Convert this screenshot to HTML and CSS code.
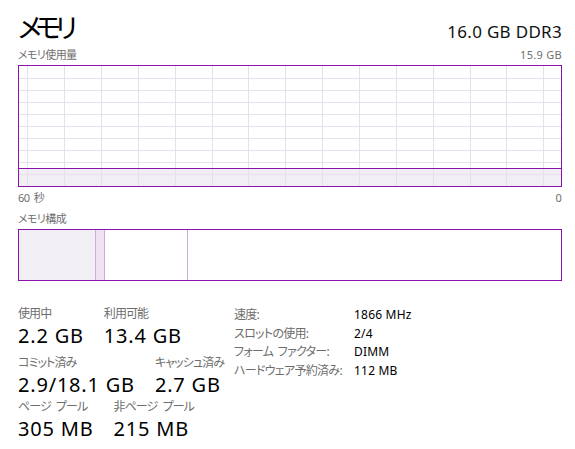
FILE: index.html
```html
<!DOCTYPE html>
<html lang="ja">
<head>
<meta charset="utf-8">
<title>メモリ</title>
<link rel="stylesheet" href="styles.css">
</head>
<body>
<div class="tm">
  <header class="hd">
    <h1 class="title">メモリ</h1>
    <div class="spec">16.0 GB DDR3</div>
  </header>
  <div class="axis axis-top"><span>メモリ使用量</span><span class="num">15.9 GB</span></div>
  <div class="graph">
    <svg width="542" height="120" viewBox="0 0 542 120">
      <rect x="0" y="103" width="542" height="17" fill="#f2eff4"/>
      <g stroke="#e7dfeb" stroke-width="1">
        <line x1="0" y1="12.5" x2="542" y2="12.5"/>
        <line x1="0" y1="24.5" x2="542" y2="24.5"/>
        <line x1="0" y1="36.5" x2="542" y2="36.5"/>
        <line x1="0" y1="48.5" x2="542" y2="48.5"/>
        <line x1="0" y1="60.5" x2="542" y2="60.5"/>
        <line x1="0" y1="72.5" x2="542" y2="72.5"/>
        <line x1="0" y1="84.5" x2="542" y2="84.5"/>
        <line x1="0" y1="96.5" x2="542" y2="96.5"/>
        <line x1="0" y1="108.5" x2="542" y2="108.5"/>
        <line x1="8.5" y1="0" x2="8.5" y2="120"/>
        <line x1="45.5" y1="0" x2="45.5" y2="120"/>
        <line x1="82.5" y1="0" x2="82.5" y2="120"/>
        <line x1="119.5" y1="0" x2="119.5" y2="120"/>
        <line x1="156.5" y1="0" x2="156.5" y2="120"/>
        <line x1="193.5" y1="0" x2="193.5" y2="120"/>
        <line x1="229.5" y1="0" x2="229.5" y2="120"/>
        <line x1="266.5" y1="0" x2="266.5" y2="120"/>
        <line x1="303.5" y1="0" x2="303.5" y2="120"/>
        <line x1="340.5" y1="0" x2="340.5" y2="120"/>
        <line x1="377.5" y1="0" x2="377.5" y2="120"/>
        <line x1="414.5" y1="0" x2="414.5" y2="120"/>
        <line x1="451.5" y1="0" x2="451.5" y2="120"/>
        <line x1="487.5" y1="0" x2="487.5" y2="120"/>
        <line x1="524.5" y1="0" x2="524.5" y2="120"/>
      </g>
      <line x1="0" y1="102.5" x2="542" y2="102.5" stroke="#8b12ae" stroke-width="1"/>
    </svg>
  </div>
  <div class="axis axis-bottom"><span>60 秒</span><span class="num">0</span></div>
  <div class="axis axis-comp"><span>メモリ構成</span></div>
  <div class="comp">
    <div class="seg seg-use"></div>
    <div class="seg seg-mod"></div>
    <div class="seg seg-standby"></div>
    <div class="seg seg-free"></div>
  </div>
  <section class="stats">
    <div class="left">
      <div class="row row1">
        <div class="stat"><div class="lbl">使用中</div><div class="val">2.2 GB</div></div>
        <div class="stat"><div class="lbl">利用可能</div><div class="val">13.4 GB</div></div>
      </div>
      <div class="row row2">
        <div class="stat"><div class="lbl">コミット済み</div><div class="val">2.9/18.1 GB</div></div>
        <div class="stat"><div class="lbl">キャッシュ済み</div><div class="val">2.7 GB</div></div>
      </div>
      <div class="row row3">
        <div class="stat"><div class="lbl">ページ プール</div><div class="val">305 MB</div></div>
        <div class="stat"><div class="lbl">非ページ プール</div><div class="val">215 MB</div></div>
      </div>
    </div>
    <dl class="right">
      <dt>速度:</dt><dd>1866 MHz</dd>
      <dt>スロットの使用:</dt><dd>2/4</dd>
      <dt>フォーム ファクター:</dt><dd>DIMM</dd>
      <dt>ハードウェア予約済み:</dt><dd>112 MB</dd>
    </dl>
  </section>
</div>
</body>
</html>
```

FILE: styles.css
```css
html, body {
  margin: 0;
  padding: 0;
  background: #ffffff;
}
body {
  font-family: "Noto Sans", "Noto Sans CJK JP", sans-serif;
  font-feature-settings: "palt" 1;
  color: #000000;
}
.tm {
  width: 544px;
  padding: 0 13px 0 18px;
}
.hd {
  display: flex;
  justify-content: space-between;
  align-items: baseline;
  padding-top: 13px;
  height: 28px;
}
.title {
  margin: 0;
  font-size: 27px;
  font-weight: normal;
  line-height: 30px;
  letter-spacing: -6px;
}
.spec {
  font-size: 17px;
  line-height: 30px;
  letter-spacing: 0.3px;
  color: #111;
}
.axis {
  display: flex;
  justify-content: space-between;
  font-size: 11px;
  line-height: 14px;
  letter-spacing: -0.6px;
  color: #6f6f6f;
}
.axis .num { letter-spacing: 0.3px; }
.axis-top { margin-top: 7px; }
.axis-bottom { margin-top: 4px; word-spacing: 2px; }
.axis-comp { margin-top: 7px; }
.graph {
  margin-top: 3px;
  width: 542px;
  height: 120px;
  border: 1px solid #8b12ae;
}
.graph svg { display: block; }
.comp {
  margin-top: 3px;
  width: 542px;
  height: 50px;
  border: 1px solid #8b12ae;
  display: flex;
}
.seg { height: 100%; }
.seg-use {
  width: 76px;
  background: #f2eff4;
  border-right: 1px solid #cdaed9;
}
.seg-mod {
  width: 8px;
  background: #eee2f2;
  border-right: 1px solid #cdaed9;
}
.seg-standby {
  width: 82px;
  border-right: 1px solid #cdaed9;
}
.seg-free { flex: 1; }
.stats {
  display: flex;
  margin-top: 25px;
}
.left {
  width: 216px;
}
.row {
  display: flex;
  gap: 20px;
}
.row2 { margin-top: 6px; }
.row3 { margin-top: 1px; }
.lbl {
  font-size: 12px;
  line-height: 16px;
  letter-spacing: -0.9px;
  word-spacing: 3px;
  color: #6d6d6d;
}
.val {
  font-size: 20px;
  line-height: 27px;
  letter-spacing: 0.8px;
  color: #000;
}
.right {
  margin: 0;
  display: grid;
  grid-template-columns: 120px auto;
  grid-auto-rows: 18.5px;
  font-size: 12px;
  line-height: 18.5px;
  align-content: start;
}
.right dt {
  color: #6d6d6d;
  letter-spacing: -0.7px;
  word-spacing: 2px;
}
.right dd {
  margin: 0;
  color: #000;
  letter-spacing: 0.2px;
}
```
